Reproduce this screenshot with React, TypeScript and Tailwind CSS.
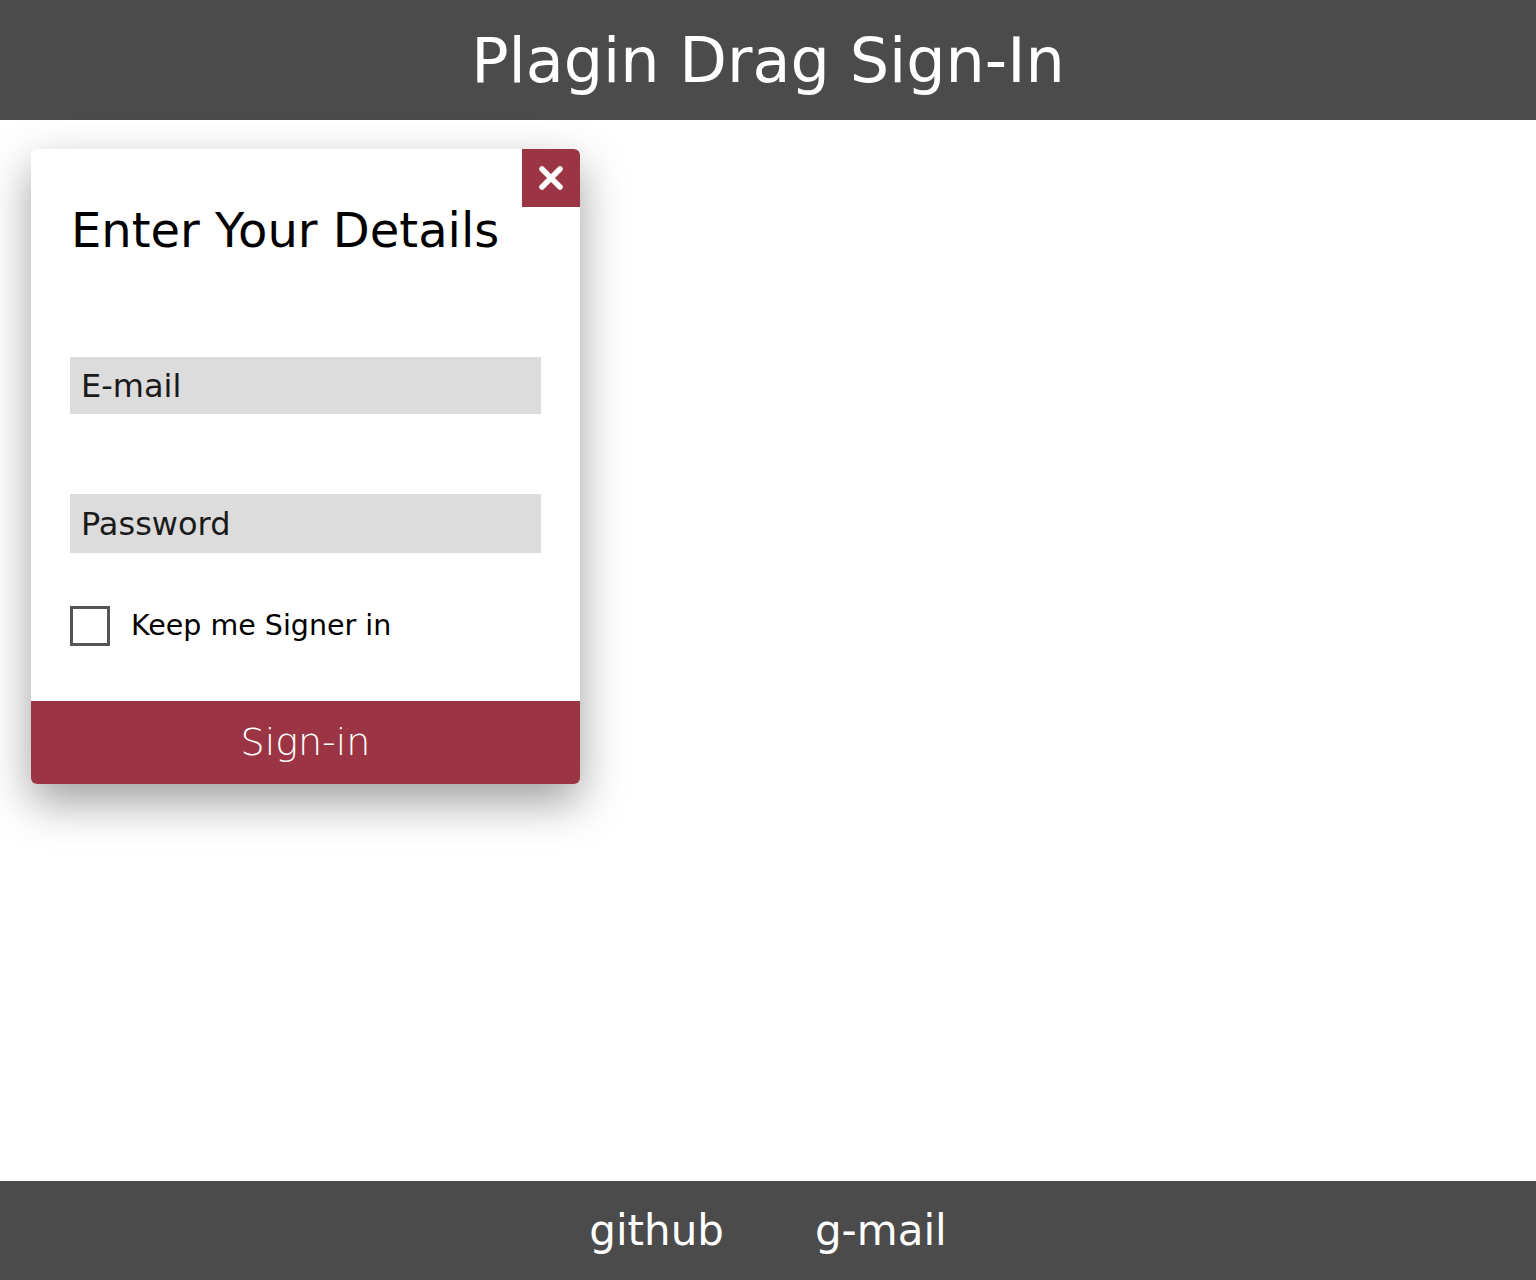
import { useState } from "react";

const App = () => {
  const [keep, setKeep] = useState(false);

  return (
    <div className="h-screen flex flex-col bg-white font-['DejaVu_Sans',sans-serif]">
      <header className="h-[120px] shrink-0 bg-[#4b4b4b] flex items-center justify-center">
        <h1 className="text-[62px] leading-none text-white font-normal pt-[2px]">Plagin Drag Sign-In</h1>
      </header>

      <main className="flex-1 pt-[29px] pl-[31px]">
        <div className="relative w-[549px] bg-white rounded-[6px] shadow-[0_18px_45px_rgba(0,0,0,0.38)]">
          <button className="absolute top-0 right-0 w-[58px] h-[58px] bg-[#9b3543] rounded-tr-[6px] flex items-center justify-center">
            <svg width="26" height="26" viewBox="0 0 26 26">
              <path d="M4 4 L22 22 M22 4 L4 22" stroke="#fff" strokeWidth="5.5" strokeLinecap="round" />
            </svg>
          </button>

          <div className="px-[39px] pt-[50px] pb-[55px]">
            <h2 className="pl-[1px] text-[48px] leading-[62px] text-black font-normal">Enter Your Details</h2>

            <div className="mt-[96px] h-[57px] bg-[#dcdcdc] flex items-center px-[11px]">
              <span className="text-[32px] text-[#1a1a1a]">E-mail</span>
            </div>

            <div className="mt-[80px] h-[59px] bg-[#dcdcdc] flex items-center px-[11px]">
              <span className="text-[32px] text-[#1a1a1a]">Password</span>
            </div>

            <label className="mt-[53px] flex items-center gap-[21px] cursor-pointer" onClick={() => setKeep(!keep)}>
              <span className="w-[40px] h-[40px] border-[3px] border-[#555] bg-white" />
              <span className="text-[28.5px] leading-[40px] text-black">Keep me Signer in</span>
            </label>
          </div>

          <button className="w-full h-[83px] bg-[#9b3543] rounded-b-[6px] text-white text-[38px] font-light">Sign-in</button>
        </div>
      </main>

      <footer className="h-[99px] shrink-0 bg-[#4b4b4b] flex items-center justify-center gap-[91px]">
        <a className="text-[42px] text-white">github</a>
        <a className="text-[42px] text-white">g-mail</a>
      </footer>
    </div>
  );
};

export default App;
